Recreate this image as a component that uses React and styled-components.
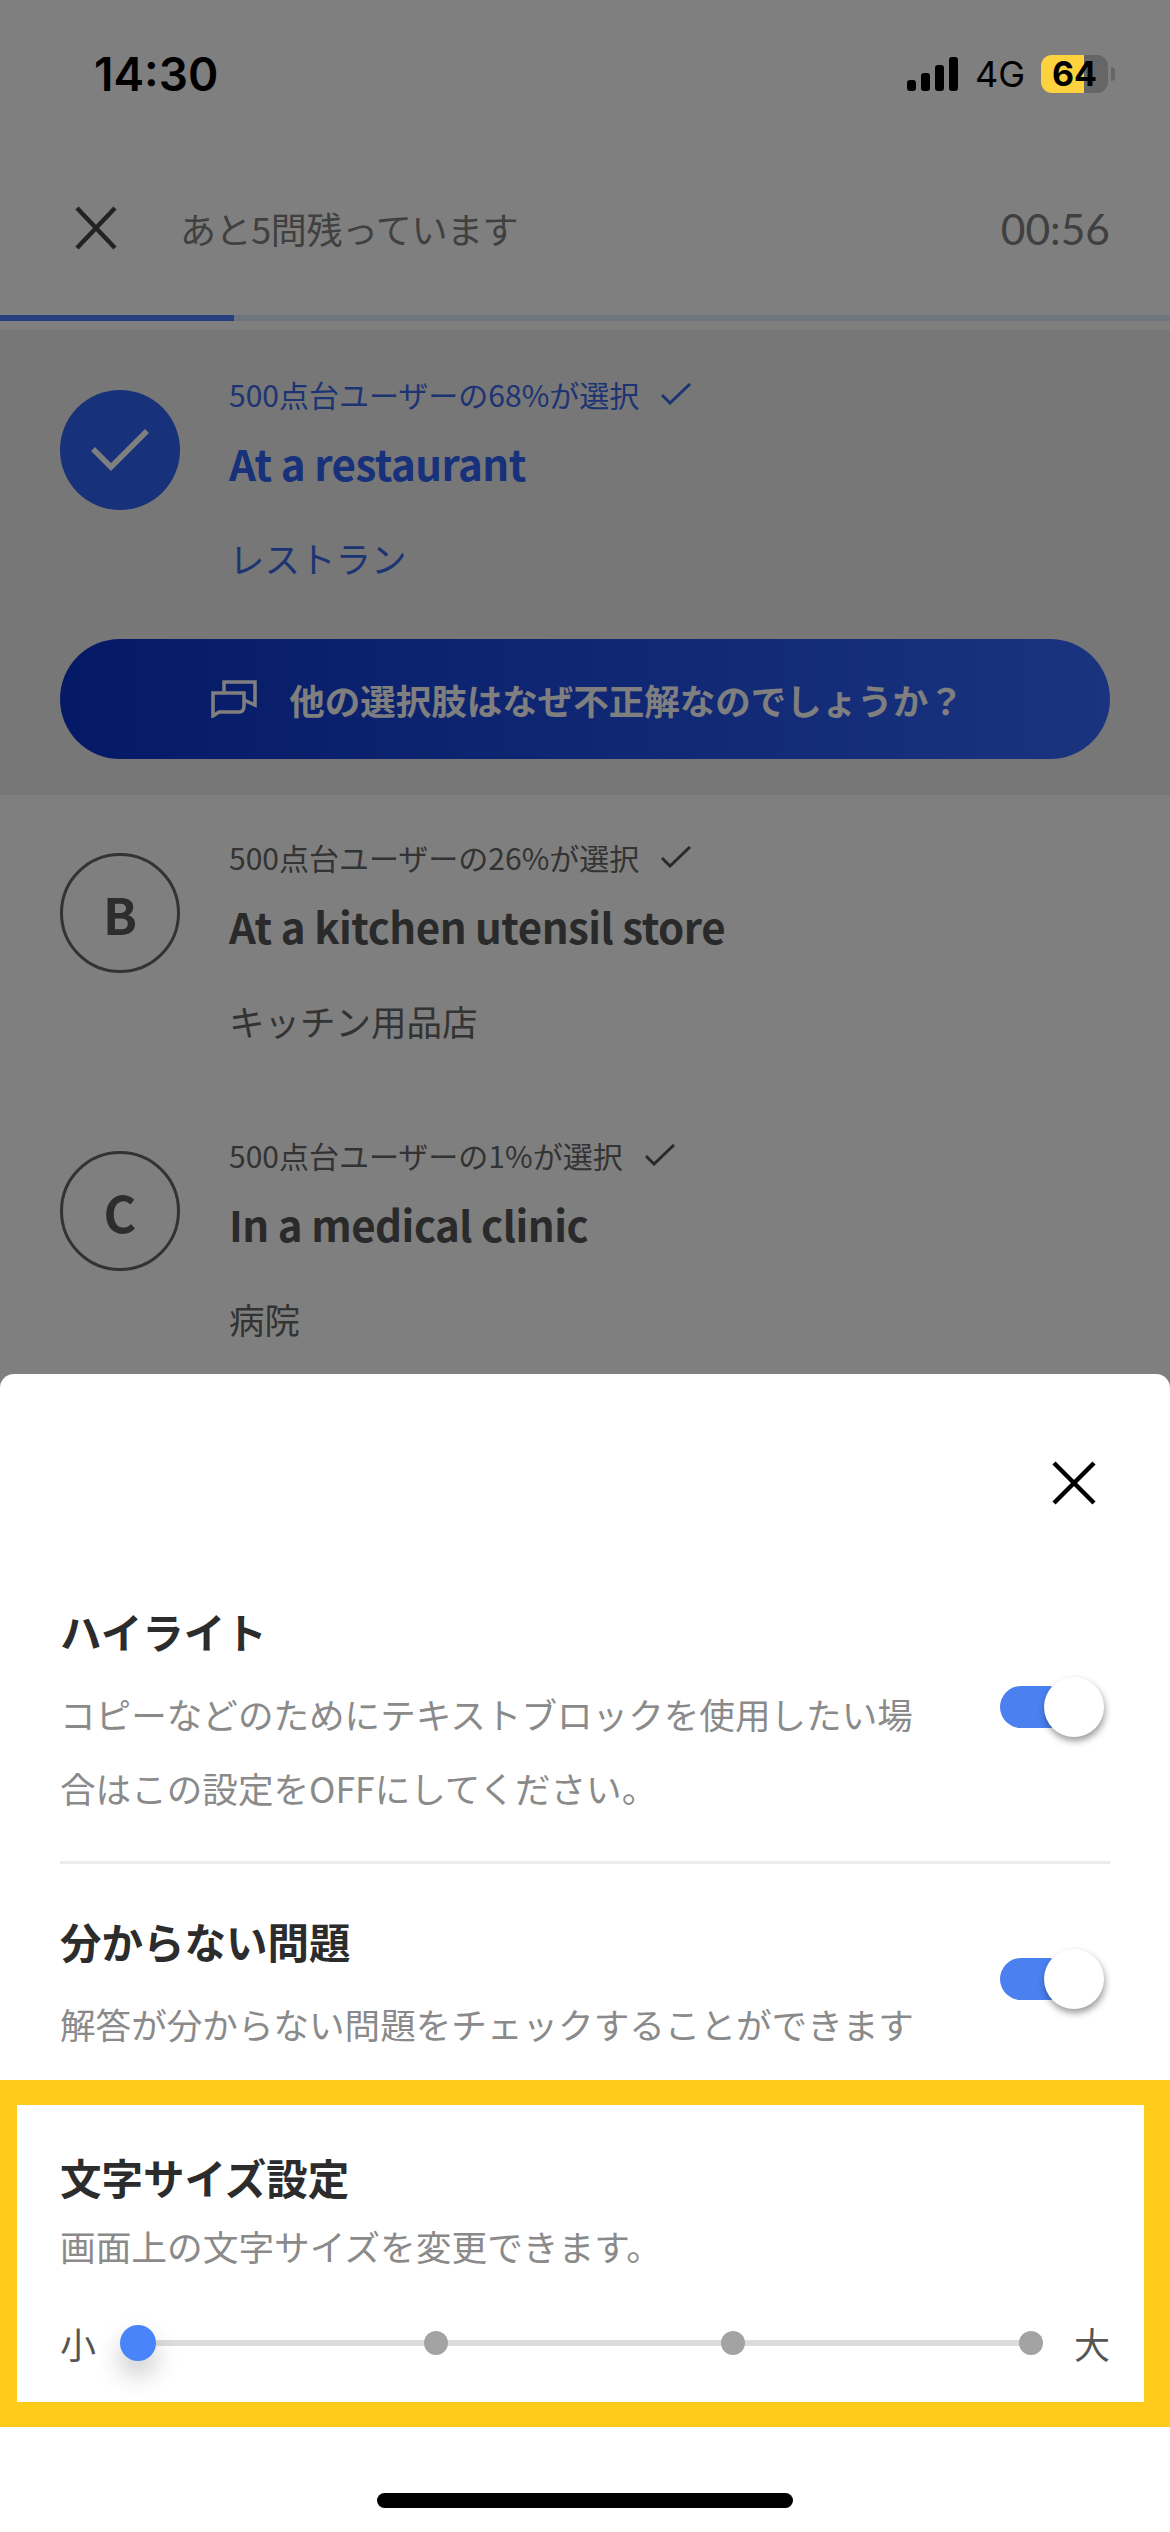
import React from 'react';
import styled, { createGlobalStyle } from 'styled-components';

const Global = createGlobalStyle`
  html, body { margin: 0; padding: 0; background: #fff; }
  * { box-sizing: border-box; }
  body { font-family: "Noto Sans CJK JP", "Noto Sans", sans-serif; }
`;

const Screen = styled.div`
  position: relative;
  width: 1170px;
  height: 2532px;
  overflow: hidden;
  background: #fff;
`;

const Scrim = styled.div`
  position: absolute;
  inset: 0;
  background: rgba(0, 0, 0, 0.5);
`;

const StatusBar = styled.div`
  position: absolute;
  top: 0;
  left: 0;
  right: 0;
  height: 150px;
  display: flex;
  justify-content: space-between;
  padding: 55px 62px 0 94px;
`;

const Clock = styled.div`
  font: 600 46px/38px Inter, sans-serif;
  color: #000;
`;

const StatusIcons = styled.div`
  display: flex;
  align-items: center;
  height: 38px;
`;

const Network = styled.span`
  font: 400 36px/38px Inter, sans-serif;
  color: #000;
  margin: 0 16px 0 17px;
`;

const Battery = styled.div`
  position: relative;
  width: 67px;
  height: 38px;
  border-radius: 11px;
  background: linear-gradient(90deg, #fcd33f 0 43px, #666 43px);
  font: 700 34px/38px Inter, sans-serif;
  color: #000;
  padding-left: 11px;
  &::after {
    content: '';
    position: absolute;
    left: 70px;
    top: 12px;
    width: 4px;
    height: 14px;
    border-radius: 0 7px 7px 0;
    background: #666;
  }
`;

const Nav = styled.div`
  height: 315px;
  display: flex;
  align-items: flex-start;
  padding: 203px 60px 0 73px;
`;

const NavClose = styled.svg`
  width: 46px;
  height: 50px;
  color: #444;
`;

const NavTitle = styled.div`
  flex: 1;
  margin-left: 61px;
  font-size: 36px;
  line-height: 50px;
  letter-spacing: -0.4px;
  color: #808080;
`;

const Timer = styled.div`
  font: 400 42.5px/52px Lato, sans-serif;
  color: #808080;
`;

const Track = styled.div`
  height: 6px;
  background: #dcebff;
`;

const TrackFill = styled.div`
  height: 100%;
  background: #4c80fe;
`;

const Gap = styled.div`
  height: 9px;
`;

const Selected = styled.div`
  height: 465px;
  background: #eee;
  padding: 42px 60px 0;
`;

const Row = styled.div`
  display: flex;
  align-items: flex-start;
  gap: 49px;
`;

const Badge = styled.div`
  flex: none;
  width: 120px;
  height: 120px;
  border-radius: 50%;
  margin-top: ${p => p.$top}px;
  display: flex;
  align-items: center;
  justify-content: center;
  font-size: 50px;
  font-weight: 700;
  color: #5a5a5a;
  border: 3px solid #666;
  &[data-on='true'] {
    border: 0;
    background: #2e62f4;
  }
`;

const Body = styled.div`
  min-width: 0;
`;

const Meta = styled.div`
  display: flex;
  align-items: center;
  gap: 22px;
  font-size: 30px;
  line-height: 44px;
  color: ${p => p.$color};
`;

const Answer = styled.div`
  font-size: 42px;
  line-height: 60px;
  font-weight: 700;
  margin-top: 17px;
  letter-spacing: -0.5px;
  color: ${p => p.$color};
`;

const Gloss = styled.div`
  font-size: 35.5px;
  line-height: 50px;
  margin-top: 40px;
  color: ${p => p.$color};
`;

const CtaButton = styled.div`
  height: 120px;
  margin-top: 56px;
  padding-left: 5px;
  border-radius: 60px;
  background: linear-gradient(90deg, #0a34cc, #3468ff);
  display: flex;
  align-items: center;
  justify-content: center;
  gap: 32px;
  font-size: 35.5px;
  font-weight: 700;
  color: #fff;
`;

const Options = styled.div`
  padding: 40px 60px 0;
  display: flex;
  flex-direction: column;
  gap: 87px;
`;

const Sheet = styled.div`
  position: absolute;
  left: 0;
  right: 0;
  bottom: 0;
  height: 1158px;
  background: #fff;
  border-radius: 14px 14px 0 0;
  display: flex;
  flex-direction: column;
`;

const SheetTop = styled.div`
  height: 232px;
  padding: 87px 74px 0 0;
  display: flex;
  justify-content: flex-end;
  align-items: flex-start;
`;

const SheetClose = styled.svg`
  width: 44px;
  height: 44px;
  color: #000;
`;

const Setting = styled.div`
  margin: 0 60px;
  display: flex;
  justify-content: space-between;
  align-items: flex-start;
  height: ${p => p.$h}px;
  padding-top: ${p => p.$pad}px;
  border-bottom: ${p => (p.$line ? '3px solid #ebebeb' : '0')};
`;

const SettingText = styled.div`
  width: 860px;
`;

const SettingTitle = styled.div`
  font-size: 41.5px;
  line-height: 50px;
  font-weight: 700;
  color: #2c2c2c;
`;

const SettingDesc = styled.div`
  font-size: 35.6px;
  line-height: 74px;
  color: #8a8a8a;
  margin-top: 21px;
`;

const Switch = styled.div`
  position: relative;
  flex: none;
  width: 110px;
  height: 42px;
  margin-top: ${p => p.$top}px;
  &::before {
    content: '';
    position: absolute;
    left: 0;
    top: 0;
    width: 70px;
    height: 42px;
    border-radius: 21px;
    background: #4a80f0;
  }
  &::after {
    content: '';
    position: absolute;
    left: 44px;
    top: -9px;
    width: 60px;
    height: 60px;
    border-radius: 50%;
    background: #fff;
    box-shadow: 1px 4px 7px rgba(0, 0, 0, 0.4);
  }
`;

const Callout = styled.div`
  margin-top: auto;
  height: 347px;
  border: solid #fecb1a;
  border-width: 25px 26px 25px 17px;
  padding: 47px 34px 0 43px;
`;

const CalloutTitle = styled.div`
  font-size: 41.5px;
  line-height: 50px;
  font-weight: 700;
  color: #2c2c2c;
`;

const CalloutDesc = styled.div`
  font-size: 35.7px;
  line-height: 50px;
  color: #8a8a8a;
  margin-top: 19px;
`;

const SliderRow = styled.div`
  display: flex;
  align-items: center;
  margin-top: 50px;
  height: 44px;
`;

const SizeLabel = styled.div`
  flex: none;
  width: 36px;
  font-size: 36px;
  line-height: 44px;
  color: #555;
`;

const Rail = styled.div`
  flex: 1;
  height: 6px;
  margin: 0 43px 0 42px;
  background: #dcdcdc;
  display: flex;
  align-items: center;
  justify-content: space-between;
`;

const Stop = styled.div`
  flex: none;
  width: ${p => (p.$on ? 36 : 24)}px;
  height: ${p => (p.$on ? 36 : 24)}px;
  margin: 0 ${p => (p.$on ? -18 : -12)}px;
  border-radius: 50%;
  background: ${p => (p.$on ? '#4a84fb' : '#a3a3a3')};
  box-shadow: ${p => (p.$on ? '0 14px 26px rgba(0,0,0,.22)' : 'none')};
`;

const HomeBar = styled.div`
  width: 416px;
  height: 15px;
  border-radius: 8px;
  background: #000;
  margin: 66px auto 24px;
  flex: none;
`;

const Tick = ({ color }) => (
  <svg width="30" height="22" viewBox="0 0 30 22" fill="none" stroke={color} strokeWidth="3">
    <path d="M1 12l8 8L29 1" />
  </svg>
);

const options = [
  { l: 'B', meta: '500点台ユーザーの26%が選択', a: 'At a kitchen utensil store', g: 'キッチン用品店' },
  { l: 'C', meta: '500点台ユーザーの1%が選択', a: 'In a medical clinic', g: '病院' },
];

export default function App() {
  return (
    <Screen>
      <Global />
      <Nav>
        <NavClose viewBox="0 0 46 50" fill="none" stroke="currentColor" strokeWidth="4.5">
          <path d="M4 5l38 40M42 5L4 45" />
        </NavClose>
        <NavTitle>あと5問残っています</NavTitle>
        <Timer>00:56</Timer>
      </Nav>
      <Track>
        <TrackFill style={{ width: '20%' }} />
      </Track>
      <Gap />
      <Selected>
        <Row>
          <Badge $top={18} data-on="true">
            <svg width="60" height="44" viewBox="0 0 60 44" fill="none" stroke="#fff" strokeWidth="5.5">
              <path d="M3 21l18 18L57 3" />
            </svg>
          </Badge>
          <Body>
            <Meta $color="#3a68e6">
              500点台ユーザーの68%が選択 <Tick color="#3a68e6" />
            </Meta>
            <Answer $color="#2e62f4">At a restaurant</Answer>
            <Gloss $color="#3a68e6">レストラン</Gloss>
          </Body>
        </Row>
        <CtaButton>
          <svg width="46" height="38" viewBox="0 0 46 38" fill="none" stroke="#fff" strokeWidth="3.5">
            <path d="M2 13h31v13q0 6-5 6H8l-6 4z" />
            <path d="M13 13V2h31v23l-11-5" />
          </svg>
          他の選択肢はなぜ不正解なのでしょうか？
        </CtaButton>
      </Selected>
      <Options>
        {options.map(o => (
          <Row key={o.l}>
            <Badge $top={18}>{o.l}</Badge>
            <Body>
              <Meta $color="#666">
                {o.meta} <Tick color="#555" />
              </Meta>
              <Answer $color="#555">{o.a}</Answer>
              <Gloss $color="#666">{o.g}</Gloss>
            </Body>
          </Row>
        ))}
      </Options>
      <Scrim />
      <StatusBar>
        <Clock>14:30</Clock>
        <StatusIcons>
          <svg width="51" height="34" viewBox="0 0 51 34" fill="#000">
            <rect x="0" y="23" width="9" height="11" rx="3" />
            <rect x="14" y="16" width="9" height="18" rx="3" />
            <rect x="28" y="8" width="9" height="26" rx="3" />
            <rect x="42" y="0" width="9" height="34" rx="3" />
          </svg>
          <Network>4G</Network>
          <Battery>64</Battery>
        </StatusIcons>
      </StatusBar>
      <Sheet>
        <SheetTop>
          <SheetClose viewBox="0 0 44 44" fill="none" stroke="currentColor" strokeWidth="4.5">
            <path d="M2 2l40 40M42 2L2 42" />
          </SheetClose>
        </SheetTop>
        <Setting $h={258} $pad={0} $line>
          <SettingText>
            <SettingTitle>ハイライト</SettingTitle>
            <SettingDesc>コピーなどのためにテキストブロックを使用したい場合はこの設定をOFFにしてください。</SettingDesc>
          </SettingText>
          <Switch $top={80} />
        </Setting>
        <Setting $h={200} $pad={52}>
          <SettingText>
            <SettingTitle>分からない問題</SettingTitle>
            <SettingDesc>解答が分からない問題をチェックすることができます</SettingDesc>
          </SettingText>
          <Switch $top={42} />
        </Setting>
        <Callout>
          <CalloutTitle>文字サイズ設定</CalloutTitle>
          <CalloutDesc>画面上の文字サイズを変更できます。</CalloutDesc>
          <SliderRow>
            <SizeLabel>小</SizeLabel>
            <Rail>
              <Stop $on />
              <Stop />
              <Stop />
              <Stop />
            </Rail>
            <SizeLabel>大</SizeLabel>
          </SliderRow>
        </Callout>
        <HomeBar />
      </Sheet>
    </Screen>
  );
}
